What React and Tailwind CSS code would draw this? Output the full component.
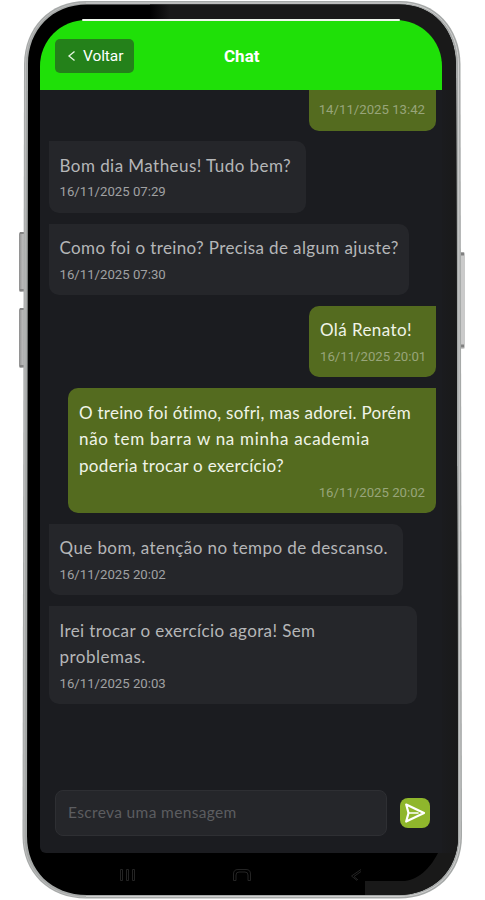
function PhoneBody() {
  return (
    <svg className="absolute inset-0" width="485" height="900" viewBox="0 0 485 900" fill="none">
      <defs>
        <linearGradient id="key" x1="0" x2="1" y1="0" y2="0">
          <stop offset="0" stopColor="#8d8d8d" />
          <stop offset="0.45" stopColor="#b4b4b4" />
          <stop offset="1" stopColor="#c9c9c9" />
        </linearGradient>
        <linearGradient id="edge" x1="0" x2="1" y1="0" y2="0">
          <stop offset="0" stopColor="#1b1c20" />
          <stop offset="1" stopColor="#191919" />
        </linearGradient>
        <linearGradient id="bezel" gradientUnits="userSpaceOnUse" x1="150" x2="170" y1="0" y2="0">
          <stop offset="0" stopColor="#000" />
          <stop offset="1" stopColor="#191919" />
        </linearGradient>
        <clipPath id="glass">
          <path d="M87 4.5H399C434 4.5 455.500 30 456 64L458 836C458 871 433 895 398 895H87C52 895 27 871 27 836L28 64C28 30 52 4.500 87 4.500Z" />
        </clipPath>
      </defs>
      <rect x="19" y="232" width="7" height="60" rx="2" fill="url(#key)" />
      <rect x="19" y="308" width="7" height="60" rx="2" fill="url(#key)" />
      <path d="M20 233h4M20 290h4M20 309h4M20 366h4" stroke="#777" strokeWidth="1.500" />
      <rect x="458" y="252" width="7" height="97" rx="2" fill="#cacaca" />
      <path d="M461 254h3M461 346h3" stroke="#808080" strokeWidth="3" />
      <path d="M86 1H400C436 1 460 28 460.500 64L462 836C462 873 436 898.500 399 898.500H86C49 898.500 22.500 873 22.500 836L24 64C24.500 28 49 1 86 1Z" fill="#a6a9a8" />
      <path d="M86 3H400C435 3 458 29 458.500 64L460 836C460 872 435 896.500 399 896.500H86" stroke="#d0d0d0" strokeWidth="1" />
      <path d="M86 897C50 897 24 872 24 836L25.500 64C26 29 50 3 86 3" stroke="#bcbcbc" strokeWidth="1" />
      <g clipPath="url(#glass)">
        <rect width="485" height="900" fill="#000" />
        <path d="M150 0H485V900H365V881H405C421 879 432 865 438 853V90H442V60L150 20Z" fill="url(#bezel)" />
        <rect x="436" y="90" width="24" height="763" fill="url(#edge)" />
      </g>
    </svg>
  );
}

function Line({ children, className }) {
  return <span className={`block w-max whitespace-nowrap ${className}`}>{children}</span>;
}

function Bubble({ mine, date, className, children }) {
  return (
    <div
      className={`pt-[11.400px] pb-[9px] text-[17px] leading-[26.700px] ${
        mine
          ? "self-end rounded-[10px] rounded-tr-none bg-[#546b1f] px-[11px] text-[#f0f4e8]"
          : "self-start rounded-[10px] rounded-tl-none bg-[#25262a] px-[10.500px] text-[#b5b6b8]"
      } ${className}`}
    >
      {children}
      <div
        className={`w-max pt-px font-[Roboto,sans-serif] text-[13.200px] leading-[23.300px] ${
          mine ? "ml-auto text-[#98a57a]" : "text-[#a0a1a3]"
        }`}
      >
        {date}
      </div>
    </div>
  );
}

function Header() {
  return (
    <header className="relative flex h-[70px] shrink-0 items-center rounded-t-[46px] bg-[#1fe008] pt-[3px] pl-[15px] font-[Roboto,sans-serif] text-white">
      <span className="absolute -top-px right-[42px] left-[42px] h-[2px] rounded-full bg-[#eef7ec]" />
      <button className="-mt-px flex h-[34px] w-[79px] items-center rounded-[5px] bg-[#24811a] pl-[12px] text-[15.500px]">
        <svg width="9" height="12" viewBox="0 0 9 12" fill="none" stroke="#e5f5e3" strokeWidth="1.300">
          <path d="M7.500 1.500 2 6l5.500 4.500" />
        </svg>
        <span className="ml-[7px] pt-[2px] tracking-[-0.100px]">Voltar</span>
      </button>
      <h1 className="ml-[90px] pt-px text-[17px] font-bold">Chat</h1>
    </header>
  );
}

function Composer() {
  return (
    <div className="mt-auto mb-[17px] flex items-center pl-[15px]">
      <div className="flex h-[46px] w-[332px] items-center rounded-[8px] border border-[#2e2f33] bg-[#25262a] pl-[12px] text-[15.500px] text-[#5c5d60]">
        <Line className="tracking-[0.350px]">Escreva uma mensagem</Line>
      </div>
      <button className="ml-[13px] flex h-[30px] w-[30px] items-center justify-center rounded-[8px] bg-[#8fb62c]">
        <svg width="30" height="30" viewBox="0 0 30 30" fill="none" stroke="#fff" strokeWidth="2.200" strokeLinejoin="round" strokeLinecap="round">
          <path d="M6.200 6.500 24 15 6.200 23.500 8.500 15Z" />
          <path d="M8.500 15H18" strokeWidth="1.600" />
        </svg>
      </button>
    </div>
  );
}

function NavBar() {
  return (
    <nav className="flex h-[44px] items-center pl-[79px]">
      <svg width="250" height="16" viewBox="0 0 250 16" fill="none" stroke="#242424">
        <path d="M1.500 2.500h2v11h-2zM7.500 2.500h2v11h-2zM13.500 2.500h2v11h-2z" />
        <path d="M114.500 13.500V7Q114.500 2.500 119 2.500H127Q131.500 2.500 131.500 7V13.500H129V8Q129 5 126 5H120Q117 5 117 8V13.500Z" />
        <path d="M242 2.500 232.500 9 238 13.500M242 4.500 235 9.500 239 13" />
      </svg>
    </nav>
  );
}

export default function App() {
  return (
    <div className="relative h-[900px] w-[485px] overflow-hidden bg-white font-[Lato,sans-serif]">
      <PhoneBody />
      <div className="relative ml-[40px] flex h-[900px] w-[402px] flex-col pt-[20px]">
        <Header />
        <main className="flex h-[763px] flex-col rounded-bl-[6px] bg-[#1b1c20]">
          <div className="flex flex-col gap-[10.900px] pr-[6px] pl-[9px]">
            <div className="flex h-[40.500px] w-[127px] flex-col justify-center self-end rounded-b-[10px] bg-[#546b1f] pr-[11px] text-right font-[Roboto,sans-serif] text-[13.200px] text-[#98a57a]">
              14/11/2025 13:42
            </div>
            <Bubble date="16/11/2025 07:29" className="w-[257px]">
              <Line className="tracking-[0.450px]">Bom dia Matheus! Tudo bem?</Line>
            </Bubble>
            <Bubble date="16/11/2025 07:30" className="w-[360px]">
              <Line className="tracking-[0.380px]">Como foi o treino? Precisa de algum ajuste?</Line>
            </Bubble>
            <Bubble mine date="16/11/2025 20:01" className="w-[127px]">
              <Line className="tracking-[0.420px]">Olá Renato!</Line>
            </Bubble>
            <Bubble mine date="16/11/2025 20:02" className="w-[368px]">
              <Line className="tracking-[0.270px]">O treino foi ótimo, sofri, mas adorei. Porém</Line>
              <Line className="tracking-[0.710px]">não tem barra w na minha academia</Line>
              <Line className="tracking-[0.330px]">poderia trocar o exercício?</Line>
            </Bubble>
            <Bubble date="16/11/2025 20:02" className="w-[354px]">
              <Line className="tracking-[0.410px]">Que bom, atenção no tempo de descanso.</Line>
            </Bubble>
            <Bubble date="16/11/2025 20:03" className="w-[368px]">
              <Line className="tracking-[0.390px]">Irei trocar o exercício agora! Sem</Line>
              <Line className="tracking-[0.500px]">problemas.</Line>
            </Bubble>
          </div>
          <Composer />
        </main>
        <NavBar />
      </div>
    </div>
  );
}
